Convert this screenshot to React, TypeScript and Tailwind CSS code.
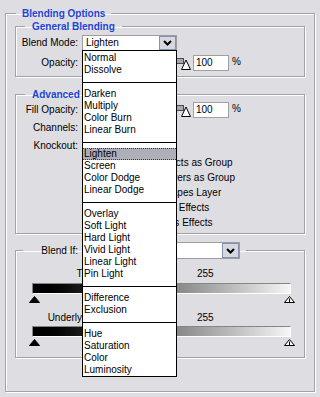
const modeGroups = [
  ['Normal', 'Dissolve'],
  ['Darken', 'Multiply', 'Color Burn', 'Linear Burn'],
  ['Lighten', 'Screen', 'Color Dodge', 'Linear Dodge'],
  ['Overlay', 'Soft Light', 'Hard Light', 'Vivid Light', 'Linear Light', 'Pin Light'],
  ['Difference', 'Exclusion'],
  ['Hue', 'Saturation', 'Color', 'Luminosity'],
]

const frame =
  'min-w-0 border border-[#a3a2a7] shadow-[inset_1px_1px_0_#fff,1px_1px_0_#fff]'

const legendTitle = 'text-[10px] font-bold leading-[13px] text-[#1c45d9]'

function SelectBox({ value, className }: { value: string; className: string }) {
  return (
    <div className={`flex items-stretch border border-[#9d9ca2] bg-white ${className}`}>
      <span className="flex flex-1 items-center overflow-hidden whitespace-nowrap pl-[3px]">{value}</span>
      <span className="flex w-[17px] items-center justify-center border border-[#8591ae] bg-[#d5d8e1]">
        <svg width="9" height="6" viewBox="0 0 9 6">
          <path d="M1 1l3.5 3.5L8 1" fill="none" stroke="#000" strokeWidth="2" />
        </svg>
      </span>
    </div>
  )
}

function PercentSlider() {
  return (
    <div className="ml-[4px] flex h-[16px] items-center">
      <svg width="109" height="16" viewBox="0 0 109 16">
        <rect x="0.5" y="3.5" width="101" height="5" fill="#a9a8ad" stroke="#4a4a4a" />
        <polygon points="99.5,14.5 104,5 108.5,14.5" fill="#fff" stroke="#000" />
      </svg>
      <div className="ml-[2px] flex h-[16px] w-[36px] items-center border border-[#a09fa5] bg-white pl-[2px]">
        100
      </div>
      <span className="ml-[3px] -mt-[3px]">%</span>
    </div>
  )
}

function Checkbox({ checked }: { checked?: boolean }) {
  return (
    <span className="flex h-[11px] w-[11px] items-center justify-center border border-[#6e6e74] bg-white">
      {checked ? (
        <svg width="9" height="9" viewBox="0 0 9 9">
          <path d="M1 4.5l2.5 2.5L8 1.5" fill="none" stroke="#000" strokeWidth="1.5" />
        </svg>
      ) : null}
    </span>
  )
}

function Thumbs() {
  return (
    <div className="ml-[13px] mt-[2px] flex h-[7px] w-[266px] justify-between">
      <svg width="11" height="7" viewBox="0 0 11 7">
        <polygon points="5.5,0.5 10.5,6.5 0.5,6.5" fill="#000" stroke="#000" />
      </svg>
      <svg width="11" height="7" viewBox="0 0 11 7">
        <polygon points="5.5,0.5 10.5,6.5 0.5,6.5" fill="#fff" stroke="#000" />
        <path d="M5.5 2.5v4" stroke="#000" />
      </svg>
    </div>
  )
}

function GradientBar({ className }: { className: string }) {
  return (
    <div
      className={`ml-[16px] h-[11px] w-[259px] border border-[#858489] border-b-white border-r-white bg-linear-to-r from-black via-[#7a7a7a] to-[#f6f6f6] ${className}`}
    />
  )
}

function BlendModeList() {
  return (
    <div className="absolute left-[82px] top-[50px] w-[95px] border border-black bg-white pt-[1px]">
      {modeGroups.map((group, index) => (
        <div key={group[0]}>
          {index > 0 ? (
            <div className="h-[12px] pt-[6px]">
              <div className="h-px bg-black" />
            </div>
          ) : null}
          {group.map((mode) =>
            mode === 'Lighten' ? (
              <div
                key={mode}
                className="h-[12px] border-y border-dotted border-[#3c3c40] bg-[#afafb7] pl-[1px] leading-[10px]"
              >
                {mode}
              </div>
            ) : (
              <div key={mode} className="h-[12px] pl-[1px] leading-[12px]">
                {mode}
              </div>
            ),
          )}
        </div>
      ))}
    </div>
  )
}

export default function App() {
  return (
    <div className="relative h-[397px] w-[320px] overflow-hidden bg-[#dedde2] px-[5px] pt-[7px] font-['Liberation_Sans',Arial,sans-serif] text-[10px] leading-[12px] text-black">
      <fieldset className={`${frame} w-[310px] pb-[33px] pl-[9px]`}>
        <legend className={`${legendTitle} ml-[1px] px-[6px]`}>Blending Options</legend>

        <fieldset className={`${frame} w-[290px]`}>
          <legend className={`${legendTitle} ml-[9px] px-[7px]`}>General Blending</legend>
          <div className="flex flex-col gap-[4px] pb-[5px] pt-[2px]">
            <div className="flex h-[16px] items-center">
              <span className="w-[62px] text-right">Blend Mode:</span>
              <SelectBox value="Lighten" className="ml-[4px] h-[16px] w-[95px]" />
            </div>
            <div className="flex h-[16px] items-center">
              <span className="w-[62px] text-right">Opacity:</span>
              <PercentSlider />
            </div>
          </div>
        </fieldset>

        <fieldset className={`${frame} mt-[11px] w-[290px]`}>
          <legend className={`${legendTitle} ml-[9px] px-[7px]`}>Advanced Blending</legend>
          <div className="pb-[3px] pt-[1px]">
            <div className="flex h-[16px] items-center">
              <span className="w-[62px] text-right">Fill Opacity:</span>
              <PercentSlider />
            </div>
            <div className="mt-[2px] flex h-[16px] items-center">
              <span className="w-[62px] text-right">Channels:</span>
              <div className="ml-[4px] flex items-center gap-[3px]">
                <Checkbox checked />
                <span>R</span>
                <Checkbox checked />
                <span>G</span>
                <Checkbox checked />
                <span>B</span>
              </div>
            </div>
            <div className="flex h-[19px] items-center">
              <span className="w-[62px] text-right">Knockout:</span>
              <SelectBox value="None" className="ml-[4px] h-[16px] w-[80px]" />
            </div>
            {[
              ['Blend Interior Effects as Group', false],
              ['Blend Clipped Layers as Group', true],
              ['Transparency Shapes Layer', true],
              ['Layer Mask Hides Effects', false],
              ['Vector Mask Hides Effects', false],
            ].map(([text, checked]) => (
              <div key={text as string} className="flex h-[15px] items-center pl-[66px]">
                <Checkbox checked={checked as boolean} />
                <span className="ml-[3px] whitespace-nowrap">{text}</span>
              </div>
            ))}
          </div>
        </fieldset>

        <fieldset className={`${frame} mt-[8px] w-[290px]`}>
          <legend className="ml-[7px] pr-[6px]">
            <div className="flex items-center">
              <span className="w-[55px] text-right">Blend If:</span>
              <SelectBox value="Gray" className="ml-[4px] h-[17px] w-[158px]" />
            </div>
          </legend>
          <div className="pb-[11px] pt-[9px]">
            <div className="flex h-[12px] items-center">
              <span className="w-[110px] text-right">This Layer:</span>
              <span className="ml-[5px] w-[66px]">0</span>
              <span>255</span>
            </div>
            <GradientBar className="mt-[3px]" />
            <Thumbs />
            <div className="mt-[9px] flex h-[12px] items-center">
              <span className="w-[110px] text-right">Underlying Layer:</span>
              <span className="ml-[5px] w-[66px]">0</span>
              <span>255</span>
            </div>
            <GradientBar className="mt-[2px]" />
            <Thumbs />
          </div>
        </fieldset>
      </fieldset>

      <BlendModeList />
    </div>
  )
}
